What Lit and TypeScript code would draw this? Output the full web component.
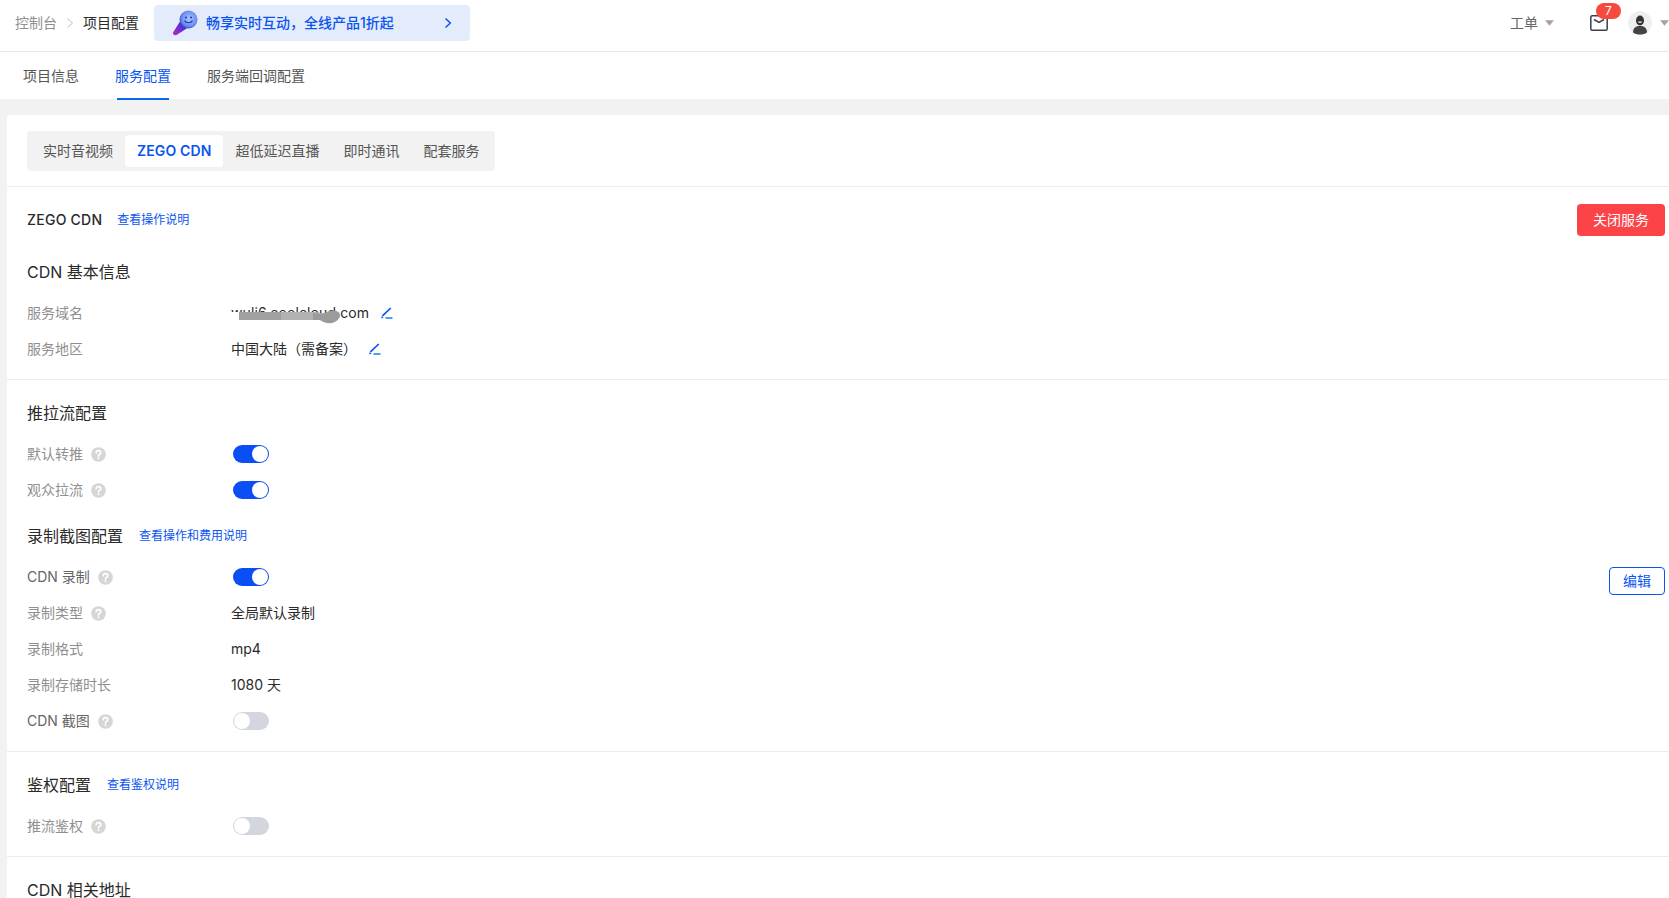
import { LitElement, html, css } from "lit";
import { customElement } from "lit/decorators.js";

const help = html`<svg class="help" viewBox="0 0 16 16" width="15" height="15"><circle cx="8" cy="8" r="7.8" fill="#d6d6d6"/><path d="M5.600 6.100c0-1.400 1.100-2.200 2.400-2.200s2.400.8 2.400 2.100c0 1.800-2.400 1.700-2.400 3.500" fill="none" stroke="#fff" stroke-width="1.800" stroke-linecap="round"/><circle cx="8" cy="12" r="1.050" fill="#fff"/></svg>`;
const pen = html`<svg class="pen" viewBox="0 0 12 12" width="12" height="12"><path d="M1.400 8.800 9.800 1" stroke="#0a55f0" stroke-width="1.700" fill="none"/><path d="M.6 9l2 1.600-2.400.9z" fill="#0a55f0"/><path d="M4.500 11h7" stroke="#2f8cf5" stroke-width="1.700"/></svg>`;
const caret = html`<svg class="caret" viewBox="0 0 9 6" width="9" height="6"><path d="M0 .3h9L4.500 5.700z" fill="#a3a3a3"/></svg>`;

@customElement("app-root")
export class AppRoot extends LitElement {
  static styles = css`
    :host { display: block; height: 898px; overflow: hidden; background: #f2f2f2; font-family: Inter, "Noto Sans CJK SC", sans-serif; font-size: 14px; color: #2a2a2a; }
    a { color: #0a55f0; text-decoration: none; }
    .top { height: 52px; box-sizing: border-box; background: #fff; border-bottom: 1px solid #e8e8e8; display: flex; align-items: center; padding: 0 0 5px 15px; }
    .top-t { padding-bottom: 2px; }
    .crumb-a { color: #8f8f8f; }
    .crumb-sep { margin: 0 9px 0 9px; display: block; }
    .banner { margin-left: 15px; width: 316px; height: 36px; box-sizing: border-box; background: #e4ebfb; border-radius: 4px; display: flex; align-items: center; padding: 0 18px 0 18px; color: #0a55f0; font-weight: 500; }
    .banner span { margin-left: 8px; flex: 1; padding-bottom: 2px; }
    .right { margin-left: auto; display: flex; align-items: center; }
    .ticket { color: #666; margin-right: 7px; padding-bottom: 2px; }
    .mail { position: relative; margin-left: 36px; margin-right: 20px; display: flex; }
    .badge { position: absolute; left: 6px; top: -12px; width: 25px; height: 16px; border-radius: 8px; background: #f54a3d; color: #fff; font-size: 12px; line-height: 16px; text-align: center; }
    .avatar { margin-right: 8px; display: block; }
    .tabs { height: 47px; box-sizing: border-box; background: #fff; display: flex; gap: 36px; padding-left: 23px; }
    .tab { position: relative; line-height: 47px; color: #555; height: 47px; }
    .tab.on { color: #0a55f0; }
    .tab.on::after { content: ""; position: absolute; left: 2px; right: 2px; bottom: -1px; height: 2px; background: #0a66f5; }
    .card { margin: 16px 0 0 7px; background: #fff; border-radius: 4px 0 0 0; height: 783px; }
    .subwrap { padding: 16px 20px 15px; border-bottom: 1px solid #ececec; }
    .sub { display: inline-flex; background: #f2f2f2; border-radius: 4px; padding: 4px; height: 40px; box-sizing: border-box; }
    .sub div { padding: 0 12px; line-height: 32px; color: #555; border-radius: 4px; }
    .sub div.on { background: #fff; color: #0a55f0; font-weight: 600; letter-spacing: .13px; }
    section { border-bottom: 1px solid #ececec; padding: 0 4px 12px 20px; }
    section.open { border: 0; }
    section.push { padding-bottom: 16px; }
    .head { display: flex; align-items: center; justify-content: space-between; height: 32px; margin-top: 17px; }
    .name { font-weight: 500; letter-spacing: .25px; margin-right: 15px; padding-bottom: 2px; }
    .link { font-size: 12px; margin-bottom: 4px; }
    .head > div { display: flex; align-items: center; }
    .danger { width: 88px; height: 32px; border: 0; border-radius: 4px; background: #fb4348; color: #fff; font: inherit; padding: 0 0 2px; }
    h3 { font-size: 16px; font-weight: 400; line-height: 24px; margin: 21px 0 11px; display: flex; align-items: center; color: #2a2a2a; }
    h3.first { margin-top: 24px; }
    h3.flush { margin-top: 0; }
    h3 a { margin-left: 16px; font-size: 12px; }
    .row { height: 36px; display: flex; align-items: center; }
    .row > span { padding-bottom: 2px; }
    .label { width: 204px; color: #8f8f8f; display: flex; align-items: center; flex: none; padding-bottom: 2px; }
    .label.dark { color: #666; }
    .help { margin-left: 8px; margin-bottom: -2px; }
    .pen { margin-left: 12px; }
    .switch { width: 36px; height: 18px; margin-left: 2px; border-radius: 9px; background: #d3d6df; position: relative; }
    .switch::after { content: ""; position: absolute; left: 1px; top: 1px; width: 16px; height: 16px; border-radius: 50%; background: #fff; }
    .switch.on { background: #0a4ff5; }
    .switch.on::after { left: 19px; }
    .mask { position: relative; letter-spacing: .1px; }
    .smudge { position: absolute; left: -2px; top: 0; }
    .rec { position: relative; }
    .edit { position: absolute; right: 4px; top: 43px; width: 56px; height: 28px; box-sizing: border-box; background: #fff; border: 1px solid #0a55f0; border-radius: 4px; color: #0a55f0; font: inherit; padding: 0 0 2px; }
  `;

  private sw(on: boolean) { return html`<div class="switch ${on ? "on" : ""}"></div>`; }

  render() {
    return html`
      <div class="top">
        <span class="crumb-a top-t">控制台</span>
        <svg class="crumb-sep" viewBox="0 0 8 12" width="8" height="12"><path d="M1.500 1.500 6.500 6l-5 4.500" fill="none" stroke="#bdbdbd"/></svg>
        <span class="top-t">项目配置</span>
        <div class="banner">
          <svg viewBox="0 0 26 26" width="26" height="26">
            <defs><linearGradient id="g" x1="0" y1="1" x2="1" y2="0"><stop offset="0" stop-color="#c026c8"/><stop offset=".55" stop-color="#5a2fd8"/><stop offset="1" stop-color="#1f2fc0"/></linearGradient>
            <radialGradient id="h" cx=".55" cy=".45" r=".6"><stop offset="0" stop-color="#a8c8ff"/><stop offset=".7" stop-color="#6d8cf0"/><stop offset="1" stop-color="#2c3cc8"/></radialGradient></defs>
            <path d="M1 22.500 9 10l8 7-12.500 8c-2 1-4-.5-3.500-2.500z" fill="url(#g)"/>
            <circle cx="16.500" cy="9.500" r="9" fill="url(#h)"/>
            <path d="M12.500 10.500c1.500 3 6.500 3 8 0" fill="none" stroke="#1a35b0" stroke-width="1.200"/>
            <circle cx="14" cy="7.500" r="1" fill="#1a35b0"/><circle cx="19" cy="7.500" r="1" fill="#1a35b0"/>
          </svg>
          <span>畅享实时互动，全线产品1折起</span>
          <svg viewBox="0 0 8 12" width="8" height="12"><path d="M1.500 1.500 6.300 6l-4.800 4.500" fill="none" stroke="#0a55f0" stroke-width="1.500"/></svg>
        </div>
        <div class="right">
          <span class="ticket">工单</span>${caret}
          <div class="mail">
            <svg viewBox="0 0 18 16" width="18" height="16"><rect x=".8" y=".8" width="16.400" height="14.400" rx="1.500" fill="none" stroke="#3a3f4a" stroke-width="1.500"/><path d="M4 4.500l5 3 5-3" fill="none" stroke="#3a3f4a" stroke-width="1.500"/></svg>
            <div class="badge">7</div>
          </div>
          <svg class="avatar" viewBox="0 0 24 24" width="24" height="24">
            <circle cx="12" cy="12" r="12" fill="#efefef"/><ellipse cx="12" cy="9.500" rx="4" ry="5" fill="#333"/><path d="M9.800 10.500c1 2 3.400 2 4.400 0z" fill="#ddd"/><path d="M5 21.500c0-5 3-6.500 7-6.500s7 1.500 7 6.500c-4 2.700-10 2.700-14 0z" fill="#444"/>
          </svg>
          ${caret}
        </div>
      </div>
      <div class="tabs">
        <div class="tab">项目信息</div><div class="tab on">服务配置</div><div class="tab">服务端回调配置</div>
      </div>
      <div class="card">
        <div class="subwrap"><div class="sub">
          <div>实时音视频</div><div class="on">ZEGO CDN</div><div>超低延迟直播</div><div>即时通讯</div><div>配套服务</div>
        </div></div>
        <section>
          <div class="head"><div><span class="name">ZEGO CDN</span><a class="link">查看操作说明</a></div><button class="danger">关闭服务</button></div>
          <h3 class="first">CDN 基本信息</h3>
          <div class="row"><div class="label">服务域名</div><span class="mask">wuli6.coolcloud.com
            <svg class="smudge" viewBox="0 0 140 22" width="140" height="22"><rect x="0" y="8" width="12" height="10" fill="#fff"/><rect x="10" y="8" width="42" height="8" fill="#a0a0a0"/><path d="M52 8h34l6 1v7H52z" fill="#b2b2b2"/><path d="M84 9c5 1 10 1 14-1 6-3 13-1 13 3 0 4-4 7-8 8-5 1-9-1-12-3h-7z" fill="#9b9b9b"/></svg></span>${pen}</div>
          <div class="row"><div class="label">服务地区</div><span>中国大陆（需备案）</span>${pen}</div>
        </section>
        <section class="open push">
          <h3>推拉流配置</h3>
          <div class="row"><div class="label">默认转推${help}</div>${this.sw(true)}</div>
          <div class="row"><div class="label">观众拉流${help}</div>${this.sw(true)}</div>
        </section>
        <section class="rec">
          <h3 class="flush">录制截图配置<a>查看操作和费用说明</a></h3>
          <div class="row"><div class="label dark">CDN 录制${help}</div>${this.sw(true)}</div>
          <div class="row"><div class="label">录制类型${help}</div><span>全局默认录制</span></div>
          <div class="row"><div class="label">录制格式</div><span>mp4</span></div>
          <div class="row"><div class="label">录制存储时长</div><span>1080 天</span></div>
          <div class="row"><div class="label dark">CDN 截图${help}</div>${this.sw(false)}</div>
          <button class="edit">编辑</button>
        </section>
        <section>
          <h3>鉴权配置<a>查看鉴权说明</a></h3>
          <div class="row"><div class="label">推流鉴权${help}</div>${this.sw(false)}</div>
        </section>
        <section class="open">
          <h3>CDN 相关地址</h3>
        </section>
      </div>
    `;
  }
}
